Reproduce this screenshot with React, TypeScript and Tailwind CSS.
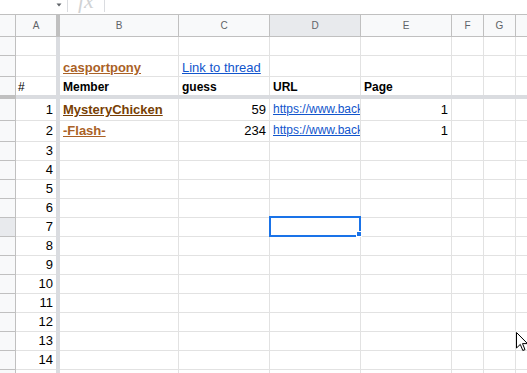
import type { ReactNode } from 'react'

type RowDef = {
  h: string
  pb: string
  a?: ReactNode
  b?: ReactNode
  c?: ReactNode
  d?: ReactNode
  e?: ReactNode
  last?: boolean
  sel?: boolean
}

const url = <span className="text-[12px] text-[#1155cc] underline">https://www.back</span>

const rows: RowDef[] = [
  { h: 'h-[19px]', pb: 'pb-[1px]' },
  {
    h: 'h-[21px]',
    pb: 'pb-[1px]',
    b: <span className="font-bold text-[#aa6126] underline">casportpony</span>,
    c: <span className="text-[#1155cc] underline">Link to thread</span>,
  },
  {
    h: 'h-[18px]',
    pb: 'pb-0',
    last: true,
    a: <span className="text-[12px]">#</span>,
    b: <span className="text-[12px] font-bold">Member</span>,
    c: <span className="text-[12px] font-bold">guess</span>,
    d: <span className="text-[12px] font-bold">URL</span>,
    e: <span className="text-[12px] font-bold">Page</span>,
  },
]

const data: RowDef[] = [
  {
    h: 'h-[22px]',
    pb: 'pb-[3px]',
    a: '1',
    b: <span className="font-bold text-[#783f04] underline">MysteryChicken</span>,
    c: '59',
    d: url,
    e: '1',
  },
  {
    h: 'h-[21px]',
    pb: 'pb-[3px]',
    a: '2',
    b: <span className="font-bold text-[#aa6126] underline">-Flash-</span>,
    c: '234',
    d: url,
    e: '1',
  },
  ...[3, 4, 5, 6, 7, 8, 9, 10, 11, 12, 13, 14, 15].map((n) => ({
    h: 'h-[19px]',
    pb: 'pb-[2px]',
    a: String(n),
    sel: n === 7,
  })),
]

function Row({ r }: { r: RowDef }) {
  const line = r.last ? '' : 'border-b'
  const cell = `flex shrink-0 items-end overflow-hidden whitespace-nowrap border-[#e2e2e2] leading-[15px] ${r.pb} ${line}`
  const right = typeof r.a === 'string'
  return (
    <div className={`flex ${r.h}`}>
      <div
        className={`w-[16px] shrink-0 border-r border-[#c0c0c0] ${line} ${r.sel ? 'bg-[#e8eaed]' : 'bg-[#f8f9fa]'}`}
      />
      <div className={`${cell} w-[40px] ${right ? 'justify-end pr-[3px]' : 'pl-[2px]'}`}>{r.a}</div>
      <div className="w-[4px] shrink-0 bg-[#dadce0]" />
      <div className={`${cell} w-[119px] border-r pl-[3px]`}>{r.b}</div>
      <div className={`${cell} w-[91px] border-r ${typeof r.c === 'string' ? 'justify-end pr-[3px]' : 'pl-[3px]'}`}>
        {r.c}
      </div>
      <div className={`${cell} relative w-[91px] border-r pl-[3px] ${r.sel ? 'overflow-visible' : ''}`}>
        {r.d}
        {r.sel && (
          <div className="absolute left-[-1px] top-[-2px] z-10 h-[21px] w-[92px] border-2 border-[#1a73e8]">
            <div className="absolute left-[85px] top-[13px] h-[6px] w-[6px] border border-white bg-[#1a73e8]" />
          </div>
        )}
      </div>
      <div className={`${cell} w-[91px] border-r ${typeof r.e === 'string' ? 'justify-end pr-[3px]' : 'pl-[3px]'}`}>
        {r.e}
      </div>
      <div className={`${cell} w-[32px] border-r`} />
      <div className={`${cell} w-[32px] border-r`} />
      <div className={`${cell} flex-1`} />
    </div>
  )
}

function ColHead({ label, w, sel }: { label: string; w: string; sel?: boolean }) {
  return (
    <div
      className={`flex shrink-0 items-center justify-center border-r border-b border-[#c0c0c0] text-[10px] text-[#5f6368] ${w} ${sel ? 'bg-[#e8eaed]' : 'bg-[#f8f9fa]'}`}
    >
      {label}
    </div>
  )
}

export default function App() {
  return (
    <div className="relative h-[373px] w-[527px] overflow-hidden bg-white font-['Liberation_Sans',Arial,sans-serif] text-[13px] text-black">
      {/* formula bar, mostly scrolled off */}
      <div className="flex h-[15px] items-start overflow-hidden border-b border-[#c0c0c0] bg-white">
        <div className="w-[56px]" />
        <svg width="6" height="8" viewBox="0 0 6 8" className="mt-[1px]">
          <path d="M0.5 2.5 L5.5 2.5 L3 5.5 Z" fill="#5f6368" />
        </svg>
        <div className="ml-[5px] h-[12px] w-px bg-[#dadce0]" />
        <span className="ml-[10px] -mt-[10px] font-['Liberation_Serif',serif] text-[22px] italic leading-[22px] text-[#d0d2d4]">
          fx
        </span>
        <div className="ml-[10px] h-[12px] w-px bg-[#dadce0]" />
      </div>

      {/* column headers */}
      <div className="flex h-[22px]">
        <div className="w-[16px] shrink-0 border-r border-b border-[#c0c0c0] bg-[#f8f9fa]" />
        <div className="flex w-[40px] shrink-0 items-center justify-center border-b border-[#c0c0c0] bg-[#f8f9fa] text-[10px] text-[#5f6368]">
          A
        </div>
        <div className="w-[4px] shrink-0 bg-[#c0c0c0]" />
        <ColHead label="B" w="w-[119px]" />
        <ColHead label="C" w="w-[91px]" />
        <ColHead label="D" w="w-[91px]" sel />
        <ColHead label="E" w="w-[91px]" />
        <ColHead label="F" w="w-[32px]" />
        <ColHead label="G" w="w-[32px]" />
        <div className="flex-1 border-b border-[#c0c0c0] bg-[#f8f9fa]" />
      </div>

      {rows.map((r, i) => (
        <Row key={i} r={r} />
      ))}

      {/* frozen row divider */}
      <div className="flex h-[4px]">
        <div className="w-[16px] shrink-0 bg-[#c0c0c0]" />
        <div className="flex-1 bg-[#dadce0]" />
      </div>

      {data.map((r, i) => (
        <Row key={i} r={r} />
      ))}

      {/* mouse pointer */}
      <svg width="12" height="20" viewBox="0 0 12 20" className="absolute left-[516px] top-[332px] z-20">
        <path d="M0.5 0.5 L0.5 16 L4.3 12.4 L6.8 18.5 L9 17.6 L6.5 11.6 L11.5 11.6 Z" fill="white" stroke="black" strokeWidth="1" />
      </svg>
    </div>
  )
}
